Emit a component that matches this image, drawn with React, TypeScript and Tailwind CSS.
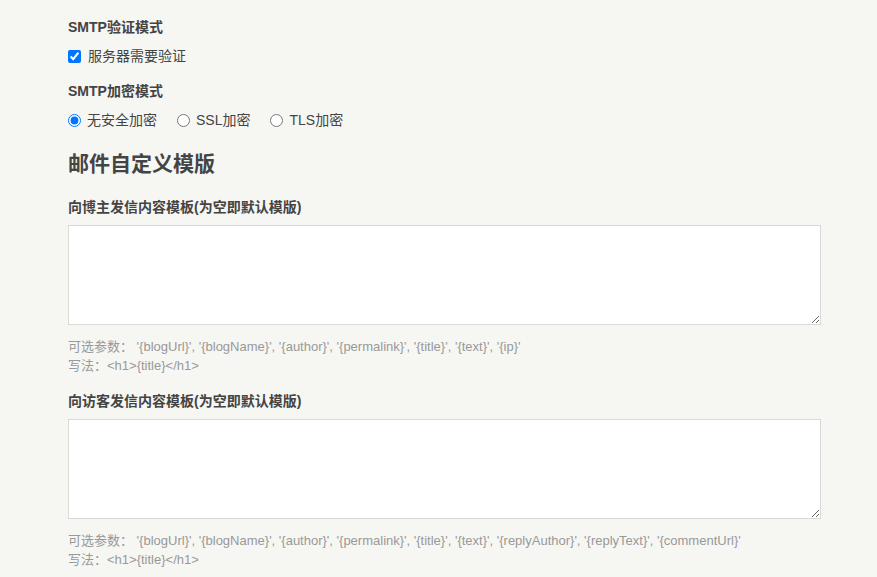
import React from "react";

const font = { fontFamily: '"Liberation Sans", Arial, "Noto Sans CJK SC", sans-serif' };

export default function App() {
  return (
    <div className="min-h-[577px] w-full bg-[#f6f6f3] text-[#444]" style={font}>
      <div className="pl-[68px] pt-[17px] pr-[56px] pb-[10px]">
        <div className="h-5 leading-5 text-[14px] font-bold">SMTP验证模式</div>
        <label className="mt-[9px] flex h-5 items-center gap-[7px] text-[14px]">
          <input type="checkbox" defaultChecked className="m-0 h-[13px] w-[13px] accent-[#0075ff]" />
          <span>服务器需要验证</span>
        </label>
        <div className="mt-[15px] h-5 leading-5 text-[14px] font-bold">SMTP加密模式</div>
        <div className="mt-[9px] flex h-5 items-center gap-[20px] text-[14px]">
          <label className="flex items-center gap-[6px]">
            <input type="radio" name="enc" defaultChecked className="m-0 h-[13px] w-[13px] accent-[#0075ff]" />
            <span>无安全加密</span>
          </label>
          <label className="flex items-center gap-[6px]">
            <input type="radio" name="enc" className="m-0 h-[13px] w-[13px] accent-[#0075ff]" />
            <span>SSL加密</span>
          </label>
          <label className="flex items-center gap-[6px]">
            <input type="radio" name="enc" className="m-0 h-[13px] w-[13px] accent-[#0075ff]" />
            <span>TLS加密</span>
          </label>
        </div>
        <h3 className="mt-[19px] h-[30px] leading-[30px] text-[21px] font-bold">邮件自定义模版</h3>
        <div className="mt-[18px] h-5 leading-5 text-[14px] font-bold">向博主发信内容模板(为空即默认模版)</div>
        <textarea className="mt-[8px] block h-[100px] w-[753px] border border-[#d9d9d6] bg-white outline-none" />
        <div className="mt-[12px] text-[13px] leading-[19px] text-[#999]">
          <div>可选参数： '{"{blogUrl}"}', '{"{blogName}"}', '{"{author}"}', '{"{permalink}"}', '{"{title}"}', '{"{text}"}', '{"{ip}"}'</div>
          <div>写法：&lt;h1&gt;{"{title}"}&lt;/h1&gt;</div>
        </div>
        <div className="mt-[16px] h-5 leading-5 text-[14px] font-bold">向访客发信内容模板(为空即默认模版)</div>
        <textarea className="mt-[8px] block h-[100px] w-[753px] border border-[#d9d9d6] bg-white outline-none" />
        <div className="mt-[12px] text-[13px] leading-[19px] text-[#999]">
          <div>可选参数： '{"{blogUrl}"}', '{"{blogName}"}', '{"{author}"}', '{"{permalink}"}', '{"{title}"}', '{"{text}"}', '{"{replyAuthor}"}', '{"{replyText}"}', '{"{commentUrl}"}'</div>
          <div>写法：&lt;h1&gt;{"{title}"}&lt;/h1&gt;</div>
        </div>
      </div>
    </div>
  );
}
